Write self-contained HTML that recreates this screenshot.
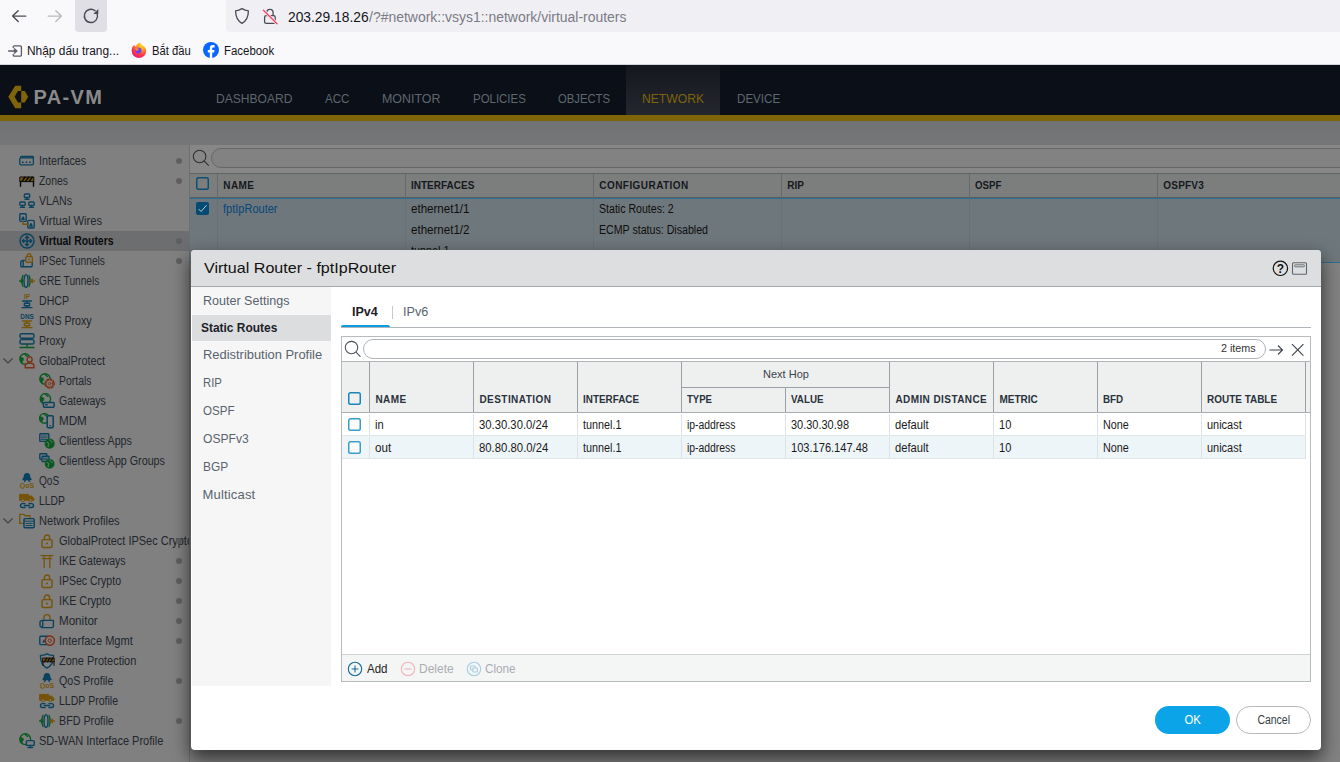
<!DOCTYPE html>
<html lang="en">
<head>
<meta charset="utf-8">
<title>PA-VM</title>
<style>
*{box-sizing:border-box;margin:0;padding:0}
html,body{width:1340px;height:762px;overflow:hidden;background:#808080}
body{font-family:"Liberation Sans",sans-serif;font-size:12px;color:#222;position:relative}
.abs{position:absolute}
/* ---------- browser chrome ---------- */
#chrome{left:0;top:0;width:1340px;height:65px;background:#f9f9fb;border-bottom:1px solid #d4d4da}
#urlbar{left:226px;top:-4px;width:1130px;height:36px;background:#f0f0f4;border-radius:4px}
#reloadbg{left:75px;top:-4px;width:32px;height:36px;background:#dfdfe5;border-radius:4px}
.urltext{top:8px;font-size:14px;line-height:18px;color:#7b7b85;white-space:nowrap}
.bm{top:42px;font-size:12px;line-height:18px;color:#15141a;white-space:nowrap}
/* ---------- app ---------- */
#apphead{left:0;top:65px;width:1340px;height:50px;background:#0b0f17}
#gold{left:0;top:115px;width:1340px;height:6px;background:#80640a}
#strip{left:0;top:121px;width:1340px;height:24px;background:linear-gradient(#717274,#757678)}
#logo{left:33.500px;top:85px;font-size:20px;line-height:24px;font-weight:bold;color:#8a8a8a;white-space:nowrap}
.nav{top:89.500px;font-size:13px;line-height:18px;color:#5f676f;white-space:nowrap}
#navsel{left:626px;top:65px;width:94px;height:50px;background:linear-gradient(#14181e,#24282e)}
/* ---------- sidebar ---------- */
#side{left:0;top:145px;width:190px;height:617px;background:#808080;border-right:1px solid #6a7074;overflow:hidden}
.it{position:absolute;left:0;width:189px;height:20px;line-height:20px;font-size:12px;color:#20262c;white-space:nowrap}
.it.sel{background:#6d6e70;font-weight:bold;color:#0c0c0c}
.it .lb{position:absolute;top:0}
.it i{position:absolute;top:7px;left:176px;width:6px;height:6px;border-radius:3px;background:#5f5f5f}
.it svg{position:absolute;top:2px}
/* ---------- bg table ---------- */
#main{left:190px;top:145px;width:1150px;height:617px;background:#828282}
.th{position:absolute;height:24px;line-height:24px;font-size:10px;font-weight:bold;color:#15191d;padding-left:5.300px;border-left:1px solid #666a6c;white-space:nowrap}
.td{position:absolute;font-size:12px;line-height:16px;color:#0e0e0e;white-space:nowrap}
/* ---------- dialog ---------- */
#dlg{left:191px;top:250px;width:1130px;height:500px;background:#fff;border-radius:4px;box-shadow:0 8px 18px 1px rgba(0,0,0,.6);overflow:hidden}
#dhead{left:0;top:0;width:1130px;height:37px;background:#dddedf;border-bottom:1px solid #a4a9ad}
#dtitle{left:12.500px;top:8px;font-size:15px;line-height:20px;color:#111;white-space:nowrap}
#lnav{left:1px;top:37px;width:139px;height:399px;background:#f6f6f6}
.ln{position:absolute;left:10.600px;font-size:13px;line-height:18px;color:#58636e;white-space:nowrap}
#lnsel{left:0;top:28px;width:139px;height:26px;background:#dcddde}
.tab{position:absolute;font-size:13px;line-height:18px;white-space:nowrap}
#grid{left:150px;top:86px;width:970px;height:346px;border:1px solid #b7bbbe;background:#fff}
.gh{position:absolute;font-size:10px;font-weight:bold;color:#2a323b;line-height:12px;white-space:nowrap}
.gc{position:absolute;font-size:12px;line-height:16px;color:#1a1a1a;white-space:nowrap}
.vl{position:absolute;width:1px;background:#9aa0a5}
.cb{position:absolute;width:13px;height:13px;border-radius:2.500px;color:#1a85b8;box-shadow:inset 0 0 0 1.500px currentColor}
.btn{position:absolute;top:456px;width:75px;height:28px;border-radius:14px;font-size:12px;line-height:26px;text-align:center}
/* per-text width calibration (Lato -> Liberation Sans) */
#t1{display:inline-block;transform-origin:0 50%;transform:scaleX(0.8956)}
#t2{display:inline-block;transform-origin:0 50%;transform:scaleX(0.8693)}
#t3{display:inline-block;transform-origin:0 50%;transform:scaleX(0.8833)}
#t4{display:inline-block;transform-origin:0 50%;transform:scaleX(0.9292)}
#t5{display:inline-block;transform-origin:0 50%;transform:scaleX(0.8682)}
#t6{display:inline-block;transform-origin:0 50%;transform:scaleX(0.8528)}
#t7{display:inline-block;transform-origin:0 50%;transform:scaleX(0.8448)}
#t8{display:inline-block;transform-origin:0 50%;transform:scaleX(0.8819)}
#t9{display:inline-block;transform-origin:0 50%;transform:scaleX(0.888)}
#t10{display:inline-block;transform-origin:0 50%;transform:scaleX(0.8733)}
#t11{display:inline-block;transform-origin:0 50%;transform:scaleX(0.9078)}
#t12{display:inline-block;transform-origin:0 50%;transform:scaleX(0.8699)}
#t13{display:inline-block;transform-origin:0 50%;transform:scaleX(0.8771)}
#t14{display:inline-block;transform-origin:0 50%;transform:scaleX(0.9696)}
#t15{display:inline-block;transform-origin:0 50%;transform:scaleX(0.8873)}
#t16{display:inline-block;transform-origin:0 50%;transform:scaleX(0.8919)}
#t17{display:inline-block;transform-origin:0 50%;transform:scaleX(0.8411)}
#t18{display:inline-block;transform-origin:0 50%;transform:scaleX(0.8624)}
#t19{display:inline-block;transform-origin:0 50%;transform:scaleX(0.9226)}
#t20{display:inline-block;transform-origin:0 50%;transform:scaleX(0.9132)}
#t21{display:inline-block;transform-origin:0 50%;transform:scaleX(0.876)}
#t22{display:inline-block;transform-origin:0 50%;transform:scaleX(0.8769)}
#t23{display:inline-block;transform-origin:0 50%;transform:scaleX(0.8978)}
#t24{display:inline-block;transform-origin:0 50%;transform:scaleX(0.9671)}
#t25{display:inline-block;transform-origin:0 50%;transform:scaleX(0.9221)}
#t26{display:inline-block;transform-origin:0 50%;transform:scaleX(0.9124)}
#t27{display:inline-block;transform-origin:0 50%;transform:scaleX(0.885)}
#t28{display:inline-block;transform-origin:0 50%;transform:scaleX(0.88)}
#t29{display:inline-block;transform-origin:0 50%;transform:scaleX(0.8931)}
#t30{display:inline-block;transform-origin:0 50%;transform:scaleX(0.9167)}
#t31{letter-spacing:0.416px}
#t32{display:inline-block;transform-origin:0 50%;transform:scaleX(0.9993)}
#t33{letter-spacing:0.441px}
#t34{letter-spacing:0.014px}
#t35{display:inline-block;transform-origin:0 50%;transform:scaleX(0.9657)}
#t36{letter-spacing:0.206px}
#t37{display:inline-block;transform-origin:0 50%;transform:scaleX(0.9179)}
#t38{display:inline-block;transform-origin:0 50%;transform:scaleX(0.9635)}
#t39{display:inline-block;transform-origin:0 50%;transform:scaleX(0.9635)}
#t40{display:inline-block;transform-origin:0 50%;transform:scaleX(0.9016)}
#t41{display:inline-block;transform-origin:0 50%;transform:scaleX(0.8817)}
#t42{display:inline-block;transform-origin:0 50%;transform:scaleX(0.8849)}
#t43{display:inline-block;transform-origin:0 50%;transform:scaleX(1.0727)}
#t44{display:inline-block;transform-origin:0 50%;transform:scaleX(0.9642)}
#t45{display:inline-block;transform-origin:0 50%;transform:scaleX(0.9184)}
#t46{display:inline-block;transform-origin:0 50%;transform:scaleX(0.9929)}
#t47{display:inline-block;transform-origin:0 50%;transform:scaleX(0.8721)}
#t48{display:inline-block;transform-origin:0 50%;transform:scaleX(0.8897)}
#t49{display:inline-block;transform-origin:0 50%;transform:scaleX(0.9303)}
#t50{display:inline-block;transform-origin:0 50%;transform:scaleX(0.9174)}
#t51{letter-spacing:0.163px}
#t52{display:inline-block;transform-origin:0 50%;transform:scaleX(0.9645)}
#t53{display:inline-block;transform-origin:0 50%;transform:scaleX(0.9686)}
#t54{display:inline-block;transform-origin:0 50%;transform:scaleX(0.9783)}
#t55{display:inline-block;transform-origin:0 50%;transform:scaleX(0.9575)}
#t56{letter-spacing:0.449px}
#t57{letter-spacing:0.455px}
#t58{display:inline-block;transform-origin:0 50%;transform:scaleX(0.9881)}
#t59{display:inline-block;transform-origin:0 50%;transform:scaleX(0.9569)}
#t60{display:inline-block;transform-origin:0 50%;transform:scaleX(0.9802)}
#t61{letter-spacing:0.42px}
#t62{letter-spacing:0.011px}
#t63{display:inline-block;transform-origin:0 50%;transform:scaleX(0.9824)}
#t64{display:inline-block;transform-origin:0 50%;transform:scaleX(0.9961)}
#t65{display:inline-block;transform-origin:0 50%;transform:scaleX(0.9311)}
#t66{display:inline-block;transform-origin:0 50%;transform:scaleX(0.94)}
#t67{display:inline-block;transform-origin:0 50%;transform:scaleX(0.9016)}
#t68{display:inline-block;transform-origin:0 50%;transform:scaleX(0.8656)}
#t69{display:inline-block;transform-origin:0 50%;transform:scaleX(0.9147)}
#t70{display:inline-block;transform-origin:0 50%;transform:scaleX(0.9325)}
#t71{display:inline-block;transform-origin:0 50%;transform:scaleX(0.9207)}
#t72{display:inline-block;transform-origin:0 50%;transform:scaleX(0.8993)}
#t73{display:inline-block;transform-origin:0 50%;transform:scaleX(0.9124)}
#t74{display:inline-block;transform-origin:0 50%;transform:scaleX(0.9708)}
#t75{display:inline-block;transform-origin:0 50%;transform:scaleX(0.9454)}
#t76{display:inline-block;transform-origin:0 50%;transform:scaleX(0.9016)}
#t77{display:inline-block;transform-origin:0 50%;transform:scaleX(0.8656)}
#t78{display:inline-block;transform-origin:0 50%;transform:scaleX(0.923)}
#t79{display:inline-block;transform-origin:0 50%;transform:scaleX(0.9325)}
#t80{display:inline-block;transform-origin:0 50%;transform:scaleX(0.9207)}
#t81{display:inline-block;transform-origin:0 50%;transform:scaleX(0.8993)}
#t82{display:inline-block;transform-origin:0 50%;transform:scaleX(0.9124)}
#t83{display:inline-block;transform-origin:0 50%;transform:scaleX(0.9213)}
#t84{display:inline-block;transform-origin:0 50%;transform:scaleX(0.9601)}
#t85{display:inline-block;transform-origin:0 50%;transform:scaleX(0.9366)}
#t86{display:inline-block;transform-origin:50% 50%;transform:scaleX(0.9456)}
#t87{display:inline-block;transform-origin:50% 50%;transform:scaleX(0.8726)}
#t88{display:inline-block;transform-origin:0 50%;transform:scaleX(0.9276)}
#t89{display:inline-block;transform-origin:0 50%;transform:scaleX(0.8888)}
#t90{display:inline-block;transform-origin:0 50%;transform:scaleX(0.9549)}
#t91{display:inline-block;transform-origin:0 50%;transform:scaleX(0.8805)}
#t92{display:inline-block;transform-origin:0 50%;transform:scaleX(0.8671)}
#t93{display:inline-block;transform-origin:0 50%;transform:scaleX(0.933)}
#t94{display:inline-block;transform-origin:0 50%;transform:scaleX(0.8924)}
#t95{display:inline-block;transform-origin:0 50%;transform:scaleX(0.9859)}
#t96{display:inline-block;transform-origin:0 50%;transform:scaleX(0.9968)}
#t97{display:inline-block;transform-origin:0 50%;transform:scaleX(0.9921)}
#t98{display:inline-block;transform-origin:0 50%;transform:scaleX(0.9353)}
#t99{display:inline-block;transform-origin:0 50%;transform:scaleX(0.9525)}
#t100{letter-spacing:1.383px}
</style>
</head>
<body>
<!-- BROWSER CHROME -->
<div id="chrome" class="abs">
  <div id="reloadbg" class="abs"></div>
  <div id="urlbar" class="abs"></div>
  <div class="urltext abs" style="left:287.500px;color:#15141a"><span id="t95">203.29.18.26</span></div><div class="urltext abs" style="left:368.700px"><span id="t96">/?#network::vsys1::network/virtual-routers</span></div>
  <div class="bm abs" style="left:27px"><span id="t97">Nhập dấu trang...</span></div><div class="bm abs" style="left:151.700px"><span id="t98">Bắt đầu</span></div><div class="bm abs" style="left:224px"><span id="t99">Facebook</span></div>
  <svg class="abs" style="left:0;top:0" width="120" height="32" viewBox="0 0 120 32" fill="none" stroke-linecap="round" stroke-linejoin="round"><path d="M25.800 16.100H12.600M18.200 10.700L12.600 16.100l5.600 5.500" stroke="#4a4a55" stroke-width="1.400"/><path d="M48.200 16.100h13.200M55.800 10.700l5.600 5.400-5.600 5.500" stroke="#b9b9bf" stroke-width="1.400"/><path d="M97.300 14.200a6.600 6.600 0 1 1-2.200-3.400" stroke="#4a4a55" stroke-width="1.400"/><path d="M98.300 9v5h-5z" fill="#4a4a55" stroke="none"/></svg>
<svg class="abs" style="left:230px;top:4px" width="52" height="24" viewBox="0 0 52 24" fill="none" stroke-linecap="round" stroke-linejoin="round"><path d="M12 4.600c2.200 1.400 4.200 2 6.400 2.200 0 6.200-2 10.200-6.400 12.600C7.600 17 5.600 13 5.600 6.800 7.800 6.600 9.800 6 12 4.600z" stroke="#4a4a55" stroke-width="1.300"/><rect x="34.600" y="11.600" width="10.600" height="7.800" rx="1.600" stroke="#4a4a55" stroke-width="1.300"/><path d="M36.700 11.400V8.600a3.200 3.200 0 0 1 6.400 0v2.800" stroke="#4a4a55" stroke-width="1.300"/><path d="M33.400 6.200l13.600 13.600" stroke="#f0f0f4" stroke-width="3"/><path d="M33.400 6.200l13.600 13.600" stroke="#ff3b62" stroke-width="1.300"/></svg>
<svg class="abs" style="left:6px;top:42px" width="18" height="18" viewBox="0 0 18 18" fill="none" stroke="#5b5b66" stroke-width="1.300" stroke-linecap="round" stroke-linejoin="round"><path d="M7.200 5.600V5a1.200 1.200 0 0 1 1.200-1.200h5.800a1.200 1.200 0 0 1 1.200 1.200v8a1.200 1.200 0 0 1-1.200 1.200H8.400a1.200 1.200 0 0 1-1.200-1.200v-.6"/><path d="M2.600 9h7.600"/><path d="M8.600 6.400L11.400 9l-2.800 2.600z" fill="#5b5b66" stroke-width="0.800"/></svg>
<svg class="abs" style="left:131px;top:42px" width="16" height="16" viewBox="0 0 16 16"><defs><radialGradient id="ffg" cx="0.700" cy="0.150" r="0.950"><stop offset="0" stop-color="#ffe226"/><stop offset="0.350" stop-color="#ff9a1f"/><stop offset="0.700" stop-color="#ff3647"/><stop offset="1" stop-color="#e31587"/></radialGradient></defs><path d="M8.600 0.400c.6 1.200 1.800 1.600 3 2.800 1.600 1 3.600 3 3.600 5.800A7.200 7.200 0 0 1 8 16 7.400 7.400 0 0 1 .6 8.800C.6 6 2 3.800 3.400 2.800c0 1 .4 1.600 1 2C5 3 6.800 1.800 8.600.4z" fill="url(#ffg)"/><circle cx="7.400" cy="8.600" r="3.100" fill="#7542e5"/><path d="M4.200 6.600c1.400-.6 3.200-.4 4.200.6-1.400 0-2.200.8-2.400 1.800-.8-.4-1.600-1.400-1.800-2.400z" fill="#ff9a1f"/></svg>
<svg class="abs" style="left:203px;top:42px" width="16" height="16" viewBox="0 0 16 16"><circle cx="8" cy="8" r="8" fill="#0866ff"/><path d="M9.200 16V10.400h1.900l.4-2.300H9.200V6.700c0-.8.300-1.300 1.300-1.300h1.100V3.300c-.5-.1-1.100-.2-1.800-.2-1.900 0-3 1.100-3 3.100v1.900H4.800v2.300h2v5.500z" fill="#fff"/></svg>
</div>
<!-- APP HEADER -->
<div id="apphead" class="abs"></div>
<div id="navsel" class="abs"></div>
<div id="gold" class="abs"></div>
<div id="strip" class="abs"></div>
<div id="logo" class="abs"><span id="t100">PA-VM</span></div>
<svg class="abs" style="left:8px;top:85px" width="21" height="24" viewBox="0 0 21 24"><path d="M7.200 0.800h6v5.200h-3.200l-3.400 5.800 3.400 5.800h3.200v5.600h-6L0.300 11.800z" fill="#80640a"/><path d="M13.200 6h3.600l3.400 5.800-3.400 5.800h-3.600z" fill="#80640a"/></svg>
<div class="nav abs" style="left:216.1px"><span id="t88">DASHBOARD</span></div>
<div class="nav abs" style="left:324.9px"><span id="t89">ACC</span></div>
<div class="nav abs" style="left:381.8px"><span id="t90">MONITOR</span></div>
<div class="nav abs" style="left:472.7px"><span id="t91">POLICIES</span></div>
<div class="nav abs" style="left:557.7px"><span id="t92">OBJECTS</span></div>
<div class="nav abs" style="left:642.2px;color:#80640a"><span id="t93">NETWORK</span></div>
<div class="nav abs" style="left:736.6px"><span id="t94">DEVICE</span></div>
<!-- SIDEBAR -->
<div id="side" class="abs">
<div class="it" style="top:6px"><svg style="left:19px" width="16" height="16" viewBox="0 0 16 16" fill="none" stroke-width="1.3" stroke-linecap="round" stroke-linejoin="round"><rect x="1.5" y="3.5" width="13" height="2" rx="1" stroke="#0a425f"/><rect x="0.8" y="4.8" width="13.6" height="7" rx="1.3" stroke="#0a425f" fill="#808080"/><path d="M2.6 10l1.2-2.2L5 10zM6.2 10l1.2-2.2L8.6 10zM9.8 10l1.2-2.2 1.2 2.2z" fill="#0a425f" stroke="none"/></svg><span class="lb" style="left:39px"><span id="t1">Interfaces</span></span><i></i></div>
<div class="it" style="top:26px"><svg style="left:19px" width="16" height="16" viewBox="0 0 16 16" fill="none" stroke-width="1.3" stroke-linecap="round" stroke-linejoin="round"><rect x="1.2" y="4" width="13.6" height="4.6" fill="#75540a" stroke="#0c0c0c" stroke-width="1"/><path d="M3 8.4l3-4.2M6.6 8.4l3-4.2M10.2 8.4l3-4.2" stroke="#0c0c0c" stroke-width="1.5"/><path d="M1.5 8.6v4.6M14.5 8.6v4.6" stroke="#0c0c0c" stroke-width="1.4"/></svg><span class="lb" style="left:39px"><span id="t2">Zones</span></span><i></i></div>
<div class="it" style="top:46px"><svg style="left:19px" width="16" height="16" viewBox="0 0 16 16" fill="none" stroke-width="1.3" stroke-linecap="round" stroke-linejoin="round"><g stroke="#0a425f" stroke-width="1.4"><rect x="5.3" y="1" width="5.4" height="3.4" rx="1"/><path d="M8 4.4v1.6M6 6.2h4"/><rect x="0.8" y="9" width="5.4" height="3.4" rx="1"/><path d="M3.5 12.4v1.6M1.5 14.3h4"/><rect x="9.8" y="9" width="5.4" height="3.4" rx="1"/><path d="M12.5 12.4v1.6M10.5 14.3h4"/></g></svg><span class="lb" style="left:39px"><span id="t3">VLANs</span></span></div>
<div class="it" style="top:66px"><svg style="left:19px" width="16" height="16" viewBox="0 0 16 16" fill="none" stroke-width="1.3" stroke-linecap="round" stroke-linejoin="round"><g stroke="#0a425f" stroke-width="1.4"><rect x="0.8" y="0.8" width="6.4" height="7.6" rx="1"/><path d="M2.8 6.4l1.2-2.4 1.2 2.4z" fill="#0a425f"/><rect x="8.8" y="7.4" width="6.4" height="7.6" rx="1"/><path d="M10.8 13l1.2-2.4 1.2 2.4z" fill="#0a425f"/></g><path d="M4 8.6v2.6h4.6" stroke="#75540a" stroke-width="1.4"/></svg><span class="lb" style="left:39px"><span id="t4">Virtual Wires</span></span></div>
<div class="it sel" style="top:86px"><svg style="left:19px" width="16" height="16" viewBox="0 0 16 16" fill="none" stroke-width="1.3" stroke-linecap="round" stroke-linejoin="round"><g stroke="#0a425f" stroke-width="1.4"><circle cx="8" cy="8" r="7"/><path d="M8 3.2v9.6M3.2 8h9.6M8 3.2L6.6 4.8M8 3.2l1.4 1.6M8 12.8l-1.4-1.6M8 12.8l1.4-1.6M3.2 8l1.6-1.4M3.2 8l1.6 1.4M12.8 8l-1.6-1.4M12.8 8l-1.6 1.4"/></g></svg><span class="lb" style="left:39px"><span id="t5">Virtual Routers</span></span><i></i></div>
<div class="it" style="top:106px"><svg style="left:19px" width="16" height="16" viewBox="0 0 16 16" fill="none" stroke-width="1.3" stroke-linecap="round" stroke-linejoin="round"><path d="M4.2 7.4v5.4a1.2 1.2 0 0 1-2.4 0v-3.4a2 2 0 0 1 2-2h9.4v5.2a1.2 1.2 0 0 1-1.2 1.2H3" stroke="#0a425f" stroke-width="1.4"/><rect x="6.8" y="3.6" width="6.6" height="5.6" rx="1" stroke="#75540a" stroke-width="1.4" fill="#808080"/><path d="M8.3 3.6V2.6a1.8 1.8 0 0 1 3.6 0v1" stroke="#75540a" stroke-width="1.4"/><circle cx="10.1" cy="6.3" r="0.9" fill="#75540a" stroke="none"/></svg><span class="lb" style="left:39px"><span id="t6">IPSec Tunnels</span></span><i></i></div>
<div class="it" style="top:126px"><svg style="left:19px" width="16" height="16" viewBox="0 0 16 16" fill="none" stroke-width="1.3" stroke-linecap="round" stroke-linejoin="round"><ellipse cx="7" cy="8" rx="2" ry="6.4" stroke="#0a425f" stroke-width="1.4"/><path d="M4 2.6c-1.4 2.4-1.4 8.4 0 10.8M10 2.6c1.4 2.4 1.4 8.4 0 10.8" stroke="#0a5a20" stroke-width="1.4"/><path d="M0.6 8h3M2.4 6.6L3.8 8 2.4 9.4" stroke="#0a5a20" stroke-width="1.4"/><path d="M15.4 8h-3.6M13.4 6.4L11.6 8l1.8 1.6" stroke="#75540a" stroke-width="1.45"/></svg><span class="lb" style="left:39px"><span id="t7">GRE Tunnels</span></span></div>
<div class="it" style="top:146px"><svg style="left:19px" width="16" height="16" viewBox="0 0 16 16" fill="none" stroke-width="1.3" stroke-linecap="round" stroke-linejoin="round"><text x="8" y="6" font-family="Liberation Sans,sans-serif" font-size="6.5" font-weight="bold" text-anchor="middle" fill="#75540a" stroke="none">IP</text><path d="M3.6 8h8.8M8 8v2M5.4 10.2h5.2v2.6H5.4zM8 12.8v1.6M3 14.6h10" stroke="#0a425f" stroke-width="1.4"/></svg><span class="lb" style="left:39px"><span id="t8">DHCP</span></span></div>
<div class="it" style="top:166px"><svg style="left:19px" width="16" height="16" viewBox="0 0 16 16" fill="none" stroke-width="1.3" stroke-linecap="round" stroke-linejoin="round"><text x="8" y="6" font-family="Liberation Sans,sans-serif" font-size="6.3" font-weight="bold" text-anchor="middle" fill="#0a425f" stroke="none">DNS</text><path d="M3.6 8h8.8M8 8v2M5.4 10.2h5.2v2.6H5.4zM8 12.8v1.6M3 14.6h10" stroke="#75540a" stroke-width="1.4"/></svg><span class="lb" style="left:39px"><span id="t9">DNS Proxy</span></span></div>
<div class="it" style="top:186px"><svg style="left:19px" width="16" height="16" viewBox="0 0 16 16" fill="none" stroke-width="1.3" stroke-linecap="round" stroke-linejoin="round"><g stroke="#0a425f" stroke-width="1.45"><rect x="1" y="0.8" width="14" height="4.4" rx="1.6"/><rect x="1" y="6.6" width="14" height="4.4" rx="1.6"/></g><path d="M8 11v2.4M1 14.4h14" stroke="#0a5a20" stroke-width="1.45"/></svg><span class="lb" style="left:39px"><span id="t10">Proxy</span></span></div>
<div class="it" style="top:206px"><svg style="left:2px;top:3px" width="12" height="14" viewBox="0 0 12 14" fill="none" stroke="#3a4046" stroke-width="1.1"><path d="M1.5 4.500l4.500 4.500 4.500-4.500"/></svg><svg style="left:19px" width="16" height="16" viewBox="0 0 16 16" fill="none" stroke-width="1.3" stroke-linecap="round" stroke-linejoin="round"><circle cx="6" cy="6" r="5.2" stroke="#0a5a20" stroke-width="1.400"/><path d="M1.4 4.6c1.800-.400 3.400.400 3.200 1.800s-1.600 1.400-1.200 3.200c-1.600-.800-2.600-2.800-2-5z" fill="#0a5a20" stroke="#0a5a20" stroke-width="0.600"/><path d="M6.2 0.9999999999999998c-.2 1.400 1.400 1.600 2.200 2.600" stroke="#0a5a20" stroke-width="1.300"/><circle cx="10.600" cy="6.400" r="2.500" stroke="#7c3216" stroke-width="1.400" fill="#808080"/><path d="M6.200 14.800v-1.600a3 3 0 0 1 3-3h2.800a3 3 0 0 1 3 3v1.600z" stroke="#7c3216" stroke-width="1.400" fill="#808080"/></svg><span class="lb" style="left:39px"><span id="t11">GlobalProtect</span></span></div>
<div class="it" style="top:226px"><svg style="left:39px" width="16" height="16" viewBox="0 0 16 16" fill="none" stroke-width="1.3" stroke-linecap="round" stroke-linejoin="round"><circle cx="6" cy="6" r="5.2" stroke="#0a5a20" stroke-width="1.400"/><path d="M1.4 4.6c1.800-.400 3.400.400 3.200 1.800s-1.600 1.400-1.200 3.200c-1.600-.800-2.600-2.800-2-5z" fill="#0a5a20" stroke="#0a5a20" stroke-width="0.600"/><path d="M6.2 0.9999999999999998c-.2 1.400 1.400 1.600 2.200 2.600" stroke="#0a5a20" stroke-width="1.300"/><circle cx="10.600" cy="10.600" r="4.500" stroke="#7c3216" stroke-width="1.500" stroke-dasharray="1.800 1.730" fill="#808080"/><circle cx="10.600" cy="10.600" r="3.500" stroke="#7c3216" stroke-width="0.900" fill="#808080"/><circle cx="10.600" cy="10.600" r="1.300" stroke="#7c3216" stroke-width="0.900"/></svg><span class="lb" style="left:59px"><span id="t12">Portals</span></span></div>
<div class="it" style="top:246px"><svg style="left:39px" width="16" height="16" viewBox="0 0 16 16" fill="none" stroke-width="1.3" stroke-linecap="round" stroke-linejoin="round"><circle cx="6.4" cy="5.8" r="5.2" stroke="#0a5a20" stroke-width="1.400"/><path d="M1.8000000000000003 4.4c1.800-.400 3.400.400 3.200 1.800s-1.600 1.400-1.200 3.200c-1.600-.800-2.600-2.800-2-5z" fill="#0a5a20" stroke="#0a5a20" stroke-width="0.600"/><path d="M6.6000000000000005 0.7999999999999996c-.2 1.400 1.400 1.600 2.200 2.600" stroke="#0a5a20" stroke-width="1.300"/><rect x="4.400" y="9.400" width="10.800" height="4.800" rx="1.200" stroke="#0a425f" stroke-width="1.450" fill="#808080"/><path d="M6.600 11.800h1.600" stroke="#0a425f" stroke-width="1.450"/></svg><span class="lb" style="left:59px"><span id="t13">Gateways</span></span></div>
<div class="it" style="top:266px"><svg style="left:39px" width="16" height="16" viewBox="0 0 16 16" fill="none" stroke-width="1.3" stroke-linecap="round" stroke-linejoin="round"><circle cx="5.4" cy="5.4" r="4.8" stroke="#0a5a20" stroke-width="1.400"/><path d="M1.2000000000000006 4.0c1.800-.400 3.400.400 3.200 1.800s-1.600 1.400-1.200 3.200c-1.600-.800-2.600-2.800-2-5z" fill="#0a5a20" stroke="#0a5a20" stroke-width="0.600"/><path d="M5.6000000000000005 0.8000000000000005c-.2 1.400 1.400 1.600 2.200 2.600" stroke="#0a5a20" stroke-width="1.300"/><rect x="8.200" y="2.800" width="6" height="12" rx="1.200" stroke="#0a425f" stroke-width="1.500" fill="#808080"/><path d="M10.600 12.800h1.200" stroke="#0a425f" stroke-width="1"/></svg><span class="lb" style="left:59px"><span id="t14">MDM</span></span></div>
<div class="it" style="top:286px"><svg style="left:39px" width="16" height="16" viewBox="0 0 16 16" fill="none" stroke-width="1.3" stroke-linecap="round" stroke-linejoin="round"><rect x="0.800" y="0.800" width="9" height="7.600" rx="0.600" stroke="#0a425f" stroke-width="1.400"/><path d="M2.400 3h5.800M2.400 4.800h5.800M2.400 6.600h5.800" stroke="#0a425f" stroke-width="0.900"/><circle cx="10.600" cy="10.600" r="4.400" stroke="#0a5a20" stroke-width="1.400" fill="#0a5a20"/><path d="M8 9.400c1.400 0 2 .8 1.800 1.800s-1 .8-.6 2.200M11 7c0 1.200 1.600 1.200 2 2.200" stroke="#808080" stroke-width="1"/></svg><span class="lb" style="left:59px"><span id="t15">Clientless Apps</span></span></div>
<div class="it" style="top:306px"><svg style="left:39px" width="16" height="16" viewBox="0 0 16 16" fill="none" stroke-width="1.3" stroke-linecap="round" stroke-linejoin="round"><rect x="0.800" y="0.800" width="7" height="5.400" rx="0.600" stroke="#0a425f" stroke-width="1.400"/><rect x="3" y="3.200" width="7" height="5.400" rx="0.600" stroke="#0a425f" stroke-width="1.400" fill="#808080"/><path d="M4.400 5.200h4M4.400 6.800h4" stroke="#0a425f" stroke-width="0.900"/><circle cx="10.600" cy="10.800" r="4.200" stroke="#0a5a20" stroke-width="1.400" fill="#0a5a20"/><path d="M8 9.600c1.400 0 2 .8 1.800 1.800s-1 .8-.6 2.200M11 7.200c0 1.200 1.600 1.200 2 2.200" stroke="#808080" stroke-width="1"/></svg><span class="lb" style="left:59px"><span id="t16">Clientless App Groups</span></span></div>
<div class="it" style="top:326px"><svg style="left:19px" width="16" height="16" viewBox="0 0 16 16" fill="none" stroke-width="1.3" stroke-linecap="round" stroke-linejoin="round"><path d="M8 0.800c1.600 0 2.600 1.200 2.600 2.800 0 1.400 1 2 1.400 3H4c.4-1 1.400-1.600 1.400-3 0-1.600 1-2.800 2.600-2.800zM6.400 7.200l-.8 1.200M9.600 7.200l.8 1.200" stroke="#0a425f" stroke-width="1.400" fill="#0a425f"/><text x="8" y="14.800" font-family="Liberation Sans,sans-serif" font-size="7" font-weight="bold" text-anchor="middle" fill="#75540a" stroke="none">QoS</text></svg><span class="lb" style="left:39px"><span id="t17">QoS</span></span></div>
<div class="it" style="top:346px"><svg style="left:19px" width="16" height="16" viewBox="0 0 16 16" fill="none" stroke-width="1.3" stroke-linecap="round" stroke-linejoin="round"><path d="M0.800 1.400h8.600v5.800H0.800zM9.400 3h3l2.600 2.400v1.800H9.400z" fill="#75540a" stroke="#75540a" stroke-width="1"/><circle cx="4" cy="7.400" r="1.500" fill="#808080" stroke="#75540a" stroke-width="1"/><circle cx="11.600" cy="7.400" r="1.500" fill="#808080" stroke="#75540a" stroke-width="1"/><path d="M6 10.600H3.400a1.900 1.900 0 0 0 0 3.800H6M10 10.600h2.600a1.900 1.900 0 0 1 0 3.800H10M5.400 12.500h5.200" stroke="#0a425f" stroke-width="1.450"/></svg><span class="lb" style="left:39px"><span id="t18">LLDP</span></span></div>
<div class="it" style="top:366px"><svg style="left:2px;top:3px" width="12" height="14" viewBox="0 0 12 14" fill="none" stroke="#3a4046" stroke-width="1.1"><path d="M1.5 4.500l4.500 4.500 4.500-4.500"/></svg><svg style="left:19px" width="16" height="16" viewBox="0 0 16 16" fill="none" stroke-width="1.3" stroke-linecap="round" stroke-linejoin="round"><path d="M0.800 10.400V1.400h4l1.200 1.400h5v2" stroke="#75540a" stroke-width="1.400"/><path d="M0.800 10.400h3.400" stroke="#75540a" stroke-width="1.400"/><rect x="5" y="5.600" width="10.200" height="9.200" rx="1" stroke="#0a425f" stroke-width="1.450"/><path d="M5 8.200h10.200M7 10.400h6.200M7 12.600h6.200" stroke="#0a425f" stroke-width="1"/></svg><span class="lb" style="left:39px"><span id="t19">Network Profiles</span></span></div>
<div class="it" style="top:386px"><svg style="left:39px" width="16" height="16" viewBox="0 0 16 16" fill="none" stroke-width="1.3" stroke-linecap="round" stroke-linejoin="round"><rect x="3" y="6.600" width="10" height="7.800" rx="1.200" stroke="#75540a" stroke-width="1.450"/><path d="M5.400 6.600V4.600a2.600 2.600 0 0 1 5.200 0v2" stroke="#75540a" stroke-width="1.450"/><circle cx="8" cy="10.400" r="1" fill="#75540a" stroke="none"/></svg><span class="lb" style="left:59px"><span id="t20">GlobalProtect IPSec Crypto</span></span><i></i></div>
<div class="it" style="top:406px"><svg style="left:39px" width="16" height="16" viewBox="0 0 16 16" fill="none" stroke-width="1.3" stroke-linecap="round" stroke-linejoin="round"><path d="M2 2.600h12M3.400 5.600h9.200M5.200 2.600v11.800M10.800 2.600v11.800" stroke="#75540a" stroke-width="1.300"/></svg><span class="lb" style="left:59px"><span id="t21">IKE Gateways</span></span><i></i></div>
<div class="it" style="top:426px"><svg style="left:39px" width="16" height="16" viewBox="0 0 16 16" fill="none" stroke-width="1.3" stroke-linecap="round" stroke-linejoin="round"><rect x="3" y="6.600" width="10" height="7.800" rx="1.200" stroke="#75540a" stroke-width="1.450"/><path d="M5.400 6.600V4.600a2.600 2.600 0 0 1 5.200 0v2" stroke="#75540a" stroke-width="1.450"/><circle cx="8" cy="10.400" r="1" fill="#75540a" stroke="none"/></svg><span class="lb" style="left:59px"><span id="t22">IPSec Crypto</span></span><i></i></div>
<div class="it" style="top:446px"><svg style="left:39px" width="16" height="16" viewBox="0 0 16 16" fill="none" stroke-width="1.3" stroke-linecap="round" stroke-linejoin="round"><rect x="3" y="6.600" width="10" height="7.800" rx="1.200" stroke="#75540a" stroke-width="1.450"/><path d="M5.400 6.600V4.600a2.600 2.600 0 0 1 5.200 0v2" stroke="#75540a" stroke-width="1.450"/><circle cx="8" cy="10.400" r="1" fill="#75540a" stroke="none"/></svg><span class="lb" style="left:59px"><span id="t23">IKE Crypto</span></span><i></i></div>
<div class="it" style="top:466px"><svg style="left:39px" width="16" height="16" viewBox="0 0 16 16" fill="none" stroke-width="1.3" stroke-linecap="round" stroke-linejoin="round"><path d="M5 6.400V4.600a3 3 0 0 1 6 0v1.800" stroke="#75540a" stroke-width="1.400"/><path d="M3.800 7.600v5a1.400 1.400 0 0 1-2.800 0V9.400a2 2 0 0 1 2-2h11.400v5.800a1.400 1.400 0 0 1-1.400 1.400H2.600" stroke="#0a425f" stroke-width="1.400"/></svg><span class="lb" style="left:59px"><span id="t24">Monitor</span></span><i></i></div>
<div class="it" style="top:486px"><svg style="left:39px" width="16" height="16" viewBox="0 0 16 16" fill="none" stroke-width="1.3" stroke-linecap="round" stroke-linejoin="round"><rect x="0.800" y="3.200" width="8.400" height="8.400" rx="1" stroke="#0a425f" stroke-width="1.400"/><path d="M3.200 9.400l1.800-3.200 1.800 3.200z" fill="#0a425f" stroke="none"/><circle cx="10.800" cy="7.600" r="4.600" stroke="#7c3216" stroke-width="1.600" stroke-dasharray="1.800 1.300" fill="#808080"/><circle cx="10.800" cy="7.600" r="1.700" stroke="#7c3216" stroke-width="1"/></svg><span class="lb" style="left:59px"><span id="t25">Interface Mgmt</span></span><i></i></div>
<div class="it" style="top:506px"><svg style="left:39px" width="16" height="16" viewBox="0 0 16 16" fill="none" stroke-width="1.3" stroke-linecap="round" stroke-linejoin="round"><path d="M8 0.800c2 1.200 4.400 1.600 6.600 1.600 0 5.600-1.400 10-6.600 12.600C2.800 12.400 1.400 8 1.400 2.400 3.600 2.400 6 2 8 0.800z" stroke="#0a425f" stroke-width="1.400"/><rect x="3.800" y="5" width="11.400" height="3.800" fill="#75540a" stroke="#0c0c0c" stroke-width="0.900"/><path d="M5.600 8.600l2.200-3.400M8.600 8.600l2.200-3.400M11.600 8.600l2.200-3.400" stroke="#0c0c0c" stroke-width="1.300"/><path d="M4 8.800v3.600M15 8.800v3.600" stroke="#0c0c0c" stroke-width="1"/></svg><span class="lb" style="left:59px"><span id="t26">Zone Protection</span></span></div>
<div class="it" style="top:526px"><svg style="left:39px" width="16" height="16" viewBox="0 0 16 16" fill="none" stroke-width="1.3" stroke-linecap="round" stroke-linejoin="round"><path d="M8 0.800c1.600 0 2.600 1.200 2.600 2.800 0 1.400 1 2 1.400 3H4c.4-1 1.400-1.600 1.400-3 0-1.600 1-2.800 2.600-2.800zM6.400 7.200l-.8 1.200M9.600 7.200l.8 1.200" stroke="#0a425f" stroke-width="1.400" fill="#0a425f"/><text x="8" y="14.800" font-family="Liberation Sans,sans-serif" font-size="7" font-weight="bold" text-anchor="middle" fill="#75540a" stroke="none">QoS</text></svg><span class="lb" style="left:59px"><span id="t27">QoS Profile</span></span><i></i></div>
<div class="it" style="top:546px"><svg style="left:39px" width="16" height="16" viewBox="0 0 16 16" fill="none" stroke-width="1.3" stroke-linecap="round" stroke-linejoin="round"><path d="M0.800 1.400h8.600v5.800H0.800zM9.400 3h3l2.600 2.400v1.800H9.400z" fill="#75540a" stroke="#75540a" stroke-width="1"/><circle cx="4" cy="7.400" r="1.500" fill="#808080" stroke="#75540a" stroke-width="1"/><circle cx="11.600" cy="7.400" r="1.500" fill="#808080" stroke="#75540a" stroke-width="1"/><path d="M6 10.600H3.400a1.900 1.900 0 0 0 0 3.800H6M10 10.600h2.600a1.900 1.900 0 0 1 0 3.800H10M5.400 12.500h5.200" stroke="#0a425f" stroke-width="1.450"/></svg><span class="lb" style="left:59px"><span id="t28">LLDP Profile</span></span></div>
<div class="it" style="top:566px"><svg style="left:39px" width="16" height="16" viewBox="0 0 16 16" fill="none" stroke-width="1.3" stroke-linecap="round" stroke-linejoin="round"><ellipse cx="7" cy="8" rx="2" ry="6.400" stroke="#0a425f" stroke-width="1.400"/><path d="M4 2.600c-1.400 2.400-1.400 8.400 0 10.800M10 2.600c1.400 2.400 1.400 8.400 0 10.800" stroke="#0a5a20" stroke-width="1.400"/><path d="M0.600 8h3M2.400 6.600L3.800 8 2.400 9.400" stroke="#0a5a20" stroke-width="1.400"/><path d="M15.400 8h-3.600M13.400 6.400L11.600 8l1.800 1.600" stroke="#75540a" stroke-width="1.450"/></svg><span class="lb" style="left:59px"><span id="t29">BFD Profile</span></span><i></i></div>
<div class="it" style="top:586px"><svg style="left:19px" width="16" height="16" viewBox="0 0 16 16" fill="none" stroke-width="1.3" stroke-linecap="round" stroke-linejoin="round"><circle cx="6.2" cy="6.2" r="5.4" stroke="#0a5a20" stroke-width="1.400"/><path d="M1.4 4.800000000000001c1.800-.400 3.400.400 3.200 1.800s-1.600 1.400-1.200 3.200c-1.600-.800-2.600-2.800-2-5z" fill="#0a5a20" stroke="#0a5a20" stroke-width="0.600"/><path d="M6.4 0.9999999999999998c-.2 1.400 1.400 1.600 2.200 2.600" stroke="#0a5a20" stroke-width="1.300"/><rect x="7.400" y="7.600" width="7.800" height="4.800" rx="1" stroke="#0a425f" stroke-width="1.450" fill="#808080"/><path d="M11.300 12.400v1.800M9 14.600h4.600" stroke="#0a425f" stroke-width="1.450"/></svg><span class="lb" style="left:39px"><span id="t30">SD-WAN Interface Profile</span></span></div>
</div>
<!-- MAIN BG TABLE -->
<div id="main" class="abs">
<div class="abs" style="left:0;top:0;width:1150px;height:28px;background:#878787"></div>
<svg class="abs" style="left:2px;top:3px" width="20" height="20" viewBox="0 0 20 20" fill="none" stroke="#2b2f33" stroke-width="1.100"><circle cx="7.600" cy="8.500" r="6.300"/><path d="M12.200 13.100l4.600 4.600"/></svg>
<div class="abs" style="left:21px;top:3px;width:1200px;height:20px;border:1px solid #65686a;border-radius:10px;background:#828282"></div>
<div class="abs" style="left:0;top:28px;width:1150px;height:25px;background:#7c7e7e;border-top:1px solid #5f6264;border-bottom:1px solid #5a5d5f"></div>
<div class="th" style="left:27px;top:29px"><span id="t31">NAME</span></div>
<div class="th" style="left:215px;top:29px"><span id="t32">INTERFACES</span></div>
<div class="th" style="left:403px;top:29px"><span id="t33">CONFIGURATION</span></div>
<div class="th" style="left:591px;top:29px"><span id="t34">RIP</span></div>
<div class="th" style="left:779px;top:29px"><span id="t35">OSPF</span></div>
<div class="th" style="left:967px;top:29px"><span id="t36">OSPFV3</span></div>
<div class="cb abs" style="left:6px;top:32px;color:#0d4f73"></div>
<div class="abs" style="left:0;top:53px;width:1150px;height:65px;background:#6e777b;border-top:1px solid #2f6f8f;border-bottom:1px solid #2f6f8f"></div>
<div class="abs" style="left:27px;top:54px;width:1px;height:63px;background:#687175"></div>
<div class="abs" style="left:215px;top:54px;width:1px;height:63px;background:#687175"></div>
<div class="abs" style="left:403px;top:54px;width:1px;height:63px;background:#687175"></div>
<div class="abs" style="left:591px;top:54px;width:1px;height:63px;background:#687175"></div>
<div class="abs" style="left:779px;top:54px;width:1px;height:63px;background:#687175"></div>
<div class="abs" style="left:967px;top:54px;width:1px;height:63px;background:#687175"></div>
<div class="abs" style="left:6px;top:57px;width:13px;height:13px;border-radius:2px;background:#044b73"><svg width="13" height="13" viewBox="0 0 13 13" fill="none" stroke="#c4c8ca" stroke-width="1"><path d="M2.600 7l2.500 2.500 5.400-6.300"/></svg></div>
<div class="td" style="left:33px;top:56px;color:#07467a"><span id="t37">fptIpRouter</span></div>
<div class="td" style="left:221px;top:56px"><span id="t38">ethernet1/1</span></div>
<div class="td" style="left:221px;top:77px"><span id="t39">ethernet1/2</span></div>
<div class="td" style="left:221px;top:98px"><span id="t40">tunnel.1</span></div>
<div class="td" style="left:409px;top:56px"><span id="t41">Static Routes: 2</span></div>
<div class="td" style="left:409px;top:77px"><span id="t42">ECMP status: Disabled</span></div>
</div>
<!-- DIALOG -->
<div id="dlg" class="abs">
<div id="dhead" class="abs"></div>
<div id="dtitle" class="abs"><span id="t43">Virtual Router - fptIpRouter</span></div>
<svg class="abs" style="left:1080px;top:9px" width="38" height="20" viewBox="0 0 38 20" fill="none"><circle cx="9.400" cy="9.300" r="7.200" stroke="#111" stroke-width="1.200"/><text x="9.400" y="13.600" font-family="Liberation Sans,sans-serif" font-size="12" font-weight="bold" text-anchor="middle" fill="#111">?</text><rect x="21.500" y="3.700" width="14" height="11.600" rx="1" stroke="#5f666c" stroke-width="1.100"/><rect x="23.600" y="5.800" width="9.800" height="2" rx="0.600" stroke="#5f666c" stroke-width="0.900"/></svg>
<div id="lnav" class="abs"><div id="lnsel" class="abs"></div>
<div class="ln" style="top:4.5px"><span id="t44">Router Settings</span></div>
<div class="ln" style="top:31.5px;left:9px;font-weight:bold;color:#1b2128"><span id="t45">Static Routes</span></div>
<div class="ln" style="top:59px"><span id="t46">Redistribution Profile</span></div>
<div class="ln" style="top:86.5px"><span id="t47">RIP</span></div>
<div class="ln" style="top:114.5px"><span id="t48">OSPF</span></div>
<div class="ln" style="top:142.5px"><span id="t49">OSPFv3</span></div>
<div class="ln" style="top:170.5px"><span id="t50">BGP</span></div>
<div class="ln" style="top:198.5px"><span id="t51">Multicast</span></div>
</div>
<div class="tab" style="left:161.400px;top:53px;font-weight:bold;color:#1b2128"><span id="t52">IPv4</span></div>
<div class="abs" style="left:201px;top:56px;width:1px;height:13px;background:#c5c9cc"></div>
<div class="tab" style="left:211.900px;top:53px;color:#58636e"><span id="t53">IPv6</span></div>
<div class="abs" style="left:150px;top:77px;width:970px;height:1px;background:#b0b5b9"></div>
<div class="abs" style="left:150px;top:74.800px;width:49px;height:2.700px;background:#0c9de0;border-radius:2px 2px 0 0"></div>
<div id="grid" class="abs"><svg class="abs" style="left:2px;top:3px" width="20" height="20" viewBox="0 0 20 20" fill="none" stroke="#4a5158" stroke-width="1.100"><circle cx="7.500" cy="7.600" r="6.200"/><path d="M12 12.200l4.400 4.400"/></svg>
<div class="abs" style="left:21px;top:2px;width:903px;height:20px;border:1px solid #aeb3b7;border-radius:10px;background:#fff"></div>
<div class="gc" style="left:878.500px;top:3px;color:#333;font-size:11px"><span id="t54">2 items</span></div>
<svg class="abs" style="left:924px;top:3px" width="44" height="20" viewBox="0 0 44 20" fill="none" stroke="#3a4148" stroke-width="1.100"><path d="M3.500 10h13M12 5.500l4.500 4.500-4.500 4.500M26 4.200l11.400 11.400M37.400 4.200l-11.400 11.400"/></svg>
<div class="abs" style="left:0;top:24px;width:968px;height:52px;background:#eef0f0;border-top:1px solid #b0b5b8;border-bottom:1px solid #a9aeb2"></div>
<div class="vl" style="left:27px;top:25px;height:50px"></div>
<div class="vl" style="left:131px;top:25px;height:50px"></div>
<div class="vl" style="left:235px;top:25px;height:50px"></div>
<div class="vl" style="left:339px;top:25px;height:50px"></div>
<div class="vl" style="left:443px;top:51px;height:24px"></div>
<div class="vl" style="left:547px;top:25px;height:50px"></div>
<div class="vl" style="left:651px;top:25px;height:50px"></div>
<div class="vl" style="left:755px;top:25px;height:50px"></div>
<div class="vl" style="left:859px;top:25px;height:50px"></div>
<div class="vl" style="left:963px;top:25px;height:50px"></div>
<div class="abs" style="left:340px;top:50px;width:207px;height:1px;background:#9aa0a5"></div>
<div class="gc" style="left:420.800px;top:29px;font-size:11.500px;color:#3a424a"><span id="t55">Next Hop</span></div>
<div class="gh" style="left:33.4px;top:57px"><span id="t56">NAME</span></div>
<div class="gh" style="left:137.4px;top:57px"><span id="t57">DESTINATION</span></div>
<div class="gh" style="left:241.4px;top:57px"><span id="t58">INTERFACE</span></div>
<div class="gh" style="left:345.4px;top:57px"><span id="t59">TYPE</span></div>
<div class="gh" style="left:449.4px;top:57px"><span id="t60">VALUE</span></div>
<div class="gh" style="left:553.4px;top:57px"><span id="t61">ADMIN DISTANCE</span></div>
<div class="gh" style="left:657.4px;top:57px"><span id="t62">METRIC</span></div>
<div class="gh" style="left:761.4px;top:57px"><span id="t63">BFD</span></div>
<div class="gh" style="left:865.4px;top:57px"><span id="t64">ROUTE TABLE</span></div>
<div class="cb" style="left:6px;top:55px"></div>
<div class="abs" style="left:0;top:76px;width:964px;height:23px;background:#fff;border-bottom:1px solid #e2e5e7"></div>
<div class="abs" style="left:27px;top:77px;width:1px;height:21px;background:#dfe2e4"></div>
<div class="abs" style="left:131px;top:77px;width:1px;height:21px;background:#dfe2e4"></div>
<div class="abs" style="left:235px;top:77px;width:1px;height:21px;background:#dfe2e4"></div>
<div class="abs" style="left:339px;top:77px;width:1px;height:21px;background:#dfe2e4"></div>
<div class="abs" style="left:443px;top:77px;width:1px;height:21px;background:#dfe2e4"></div>
<div class="abs" style="left:547px;top:77px;width:1px;height:21px;background:#dfe2e4"></div>
<div class="abs" style="left:651px;top:77px;width:1px;height:21px;background:#dfe2e4"></div>
<div class="abs" style="left:755px;top:77px;width:1px;height:21px;background:#dfe2e4"></div>
<div class="abs" style="left:859px;top:77px;width:1px;height:21px;background:#dfe2e4"></div>
<div class="abs" style="left:963px;top:77px;width:1px;height:21px;background:#dfe2e4"></div>
<div class="cb" style="left:6px;top:81px;color:#3b9dcc;background:#fff"></div>
<div class="gc" style="left:33.4px;top:80px"><span id="t65">in</span></div>
<div class="gc" style="left:137.4px;top:80px"><span id="t66">30.30.30.0/24</span></div>
<div class="gc" style="left:241.4px;top:80px"><span id="t67">tunnel.1</span></div>
<div class="gc" style="left:345.4px;top:80px"><span id="t68">ip-address</span></div>
<div class="gc" style="left:449.4px;top:80px"><span id="t69">30.30.30.98</span></div>
<div class="gc" style="left:553.4px;top:80px"><span id="t70">default</span></div>
<div class="gc" style="left:657.4px;top:80px"><span id="t71">10</span></div>
<div class="gc" style="left:761.4px;top:80px"><span id="t72">None</span></div>
<div class="gc" style="left:865.4px;top:80px"><span id="t73">unicast</span></div>
<div class="abs" style="left:0;top:99px;width:964px;height:23px;background:#eef5f8;border-bottom:1px solid #e2e5e7"></div>
<div class="abs" style="left:27px;top:100px;width:1px;height:21px;background:#dfe2e4"></div>
<div class="abs" style="left:131px;top:100px;width:1px;height:21px;background:#dfe2e4"></div>
<div class="abs" style="left:235px;top:100px;width:1px;height:21px;background:#dfe2e4"></div>
<div class="abs" style="left:339px;top:100px;width:1px;height:21px;background:#dfe2e4"></div>
<div class="abs" style="left:443px;top:100px;width:1px;height:21px;background:#dfe2e4"></div>
<div class="abs" style="left:547px;top:100px;width:1px;height:21px;background:#dfe2e4"></div>
<div class="abs" style="left:651px;top:100px;width:1px;height:21px;background:#dfe2e4"></div>
<div class="abs" style="left:755px;top:100px;width:1px;height:21px;background:#dfe2e4"></div>
<div class="abs" style="left:859px;top:100px;width:1px;height:21px;background:#dfe2e4"></div>
<div class="abs" style="left:963px;top:100px;width:1px;height:21px;background:#dfe2e4"></div>
<div class="cb" style="left:6px;top:104px;color:#3b9dcc;background:#fff"></div>
<div class="gc" style="left:33.4px;top:103px"><span id="t74">out</span></div>
<div class="gc" style="left:137.4px;top:103px"><span id="t75">80.80.80.0/24</span></div>
<div class="gc" style="left:241.4px;top:103px"><span id="t76">tunnel.1</span></div>
<div class="gc" style="left:345.4px;top:103px"><span id="t77">ip-address</span></div>
<div class="gc" style="left:449.4px;top:103px"><span id="t78">103.176.147.48</span></div>
<div class="gc" style="left:553.4px;top:103px"><span id="t79">default</span></div>
<div class="gc" style="left:657.4px;top:103px"><span id="t80">10</span></div>
<div class="gc" style="left:761.4px;top:103px"><span id="t81">None</span></div>
<div class="gc" style="left:865.4px;top:103px"><span id="t82">unicast</span></div>
<div class="abs" style="left:0;top:317px;width:968px;height:27px;background:#f4f6f6;border-top:1px solid #cfd3d6"></div>
<svg class="abs" style="left:5.300px;top:324px" width="16" height="16" viewBox="0 0 16 16" fill="none" stroke="#1a6d94" stroke-width="1.100"><circle cx="8" cy="8" r="6.700"/><path d="M8 4.600v6.800M4.600 8h6.800"/></svg>
<div class="gc" style="left:24.500px;top:324px;font-size:12.500px;color:#222"><span id="t83">Add</span></div>
<svg class="abs" style="left:58.300px;top:324px" width="16" height="16" viewBox="0 0 16 16" fill="none" stroke="#efb4b8" stroke-width="1.100"><circle cx="8" cy="8" r="6.700"/><path d="M4.400 8h7.200"/></svg>
<div class="gc" style="left:76.700px;top:324px;font-size:12.500px;color:#a9adb0"><span id="t84">Delete</span></div>
<svg class="abs" style="left:124.300px;top:324px" width="16" height="16" viewBox="0 0 16 16" fill="none" stroke="#a8cde2" stroke-width="1.100"><circle cx="8" cy="8" r="6.700"/><rect x="4.600" y="5" width="4.600" height="4" rx="0.800"/><rect x="6.800" y="7" width="4.600" height="4" rx="0.800" fill="#f4f6f6"/></svg>
<div class="gc" style="left:142.800px;top:324px;font-size:12.500px;color:#a9adb0"><span id="t85">Clone</span></div></div>
<div class="btn" style="left:964px;background:#0ba4e8;color:#fff;line-height:28px"><span id="t86">OK</span></div>
<div class="btn" style="left:1045px;border:1px solid #b4bac0;color:#333d47;background:#fff"><span id="t87">Cancel</span></div>
</div>
</body>
</html>
